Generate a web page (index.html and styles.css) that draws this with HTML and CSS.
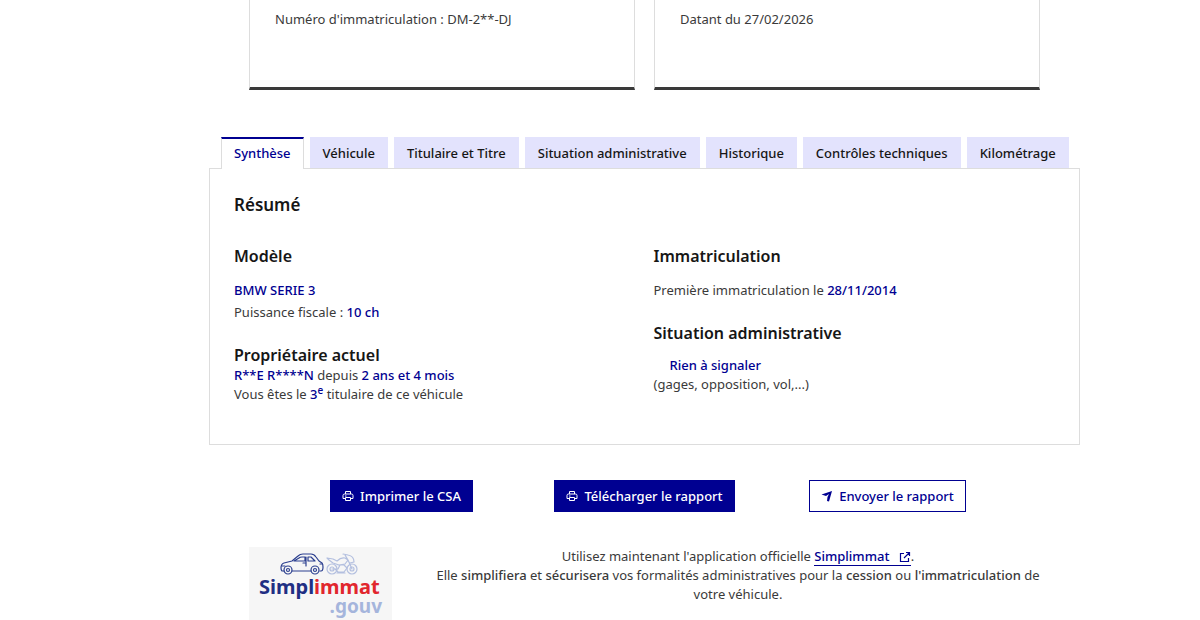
FILE: index.html
```html
<!DOCTYPE html>
<html lang="fr">
<head>
    <meta charset="UTF-8">
    <meta name="viewport" content="width=device-width, initial-scale=1.0">
    <title>Rapport du véhicule</title>
    <link rel="stylesheet" href="styles.css">
</head>
<body>
    <main class="page">
        <div class="cards">
            <div class="card">
                <p>Numéro d'immatriculation : DM-2**-DJ</p>
            </div>
            <div class="card">
                <p>Datant du 27/02/2026</p>
            </div>
        </div>

        <div class="tabs" role="tablist">
            <button type="button" class="tab active" role="tab" aria-selected="true" aria-controls="synthese">Synthèse</button>
            <button type="button" class="tab" role="tab">Véhicule</button>
            <button type="button" class="tab" role="tab">Titulaire et Titre</button>
            <button type="button" class="tab" role="tab">Situation administrative</button>
            <button type="button" class="tab" role="tab">Historique</button>
            <button type="button" class="tab" role="tab">Contrôles techniques</button>
            <button type="button" class="tab" role="tab">Kilométrage</button>
        </div>

        <section class="panel" id="synthese" role="tabpanel">
            <h2>Résumé</h2>
            <div class="columns">
                <div class="column">
                    <div class="block">
                        <h3>Modèle</h3>
                        <p class="value">BMW SERIE 3</p>
                        <p>Puissance fiscale : <span class="value">10 ch</span></p>
                    </div>
                    <div class="block compact">
                        <h3>Propriétaire actuel</h3>
                        <p><span class="value">R**E R****N</span> depuis <span class="value">2 ans et 4 mois</span></p>
                        <p>Vous êtes le <span class="value">3<sup>e</sup></span> titulaire de ce véhicule</p>
                    </div>
                </div>
                <div class="column">
                    <div class="block">
                        <h3>Immatriculation</h3>
                        <p>Première immatriculation le <span class="value">28/11/2014</span></p>
                    </div>
                    <div class="block status">
                        <h3>Situation administrative</h3>
                        <p class="value indent">Rien à signaler</p>
                        <p>(gages, opposition, vol,...)</p>
                    </div>
                </div>
            </div>
        </section>

        <div class="actions">
            <button type="button" class="btn">
                <svg class="icon" viewBox="0 0 24 24" aria-hidden="true"><path fill="none" stroke="currentColor" stroke-width="2" d="M7 8V3h10v5M6 17H2v-6q0-3 3-3h14q3 0 3 3v6h-4M7 15h10v6H7zM6 12h3"/></svg>
                Imprimer le CSA
            </button>
            <button type="button" class="btn">
                <svg class="icon" viewBox="0 0 24 24" aria-hidden="true"><path fill="none" stroke="currentColor" stroke-width="2" d="M7 8V3h10v5M6 17H2v-6q0-3 3-3h14q3 0 3 3v6h-4M7 15h10v6H7zM6 12h3"/></svg>
                Télécharger le rapport
            </button>
            <button type="button" class="btn btn-secondary">
                <svg class="icon" viewBox="0 0 24 24" aria-hidden="true"><path fill="currentColor" d="M1 9 22 2l-6 21-4-1 1-8 3-6-6 4z"/></svg>
                Envoyer le rapport
            </button>
        </div>

        <div class="promo">
            <div class="logo">
                <svg class="vehicles" viewBox="0 0 80 22" aria-hidden="true">
                    <g fill="none" stroke="#2b3f8f" stroke-width="1.2" stroke-linecap="round" stroke-linejoin="round">
                        <path d="M5 18H3q-1-1-1-3 0-4 3-5l8-2 6-5q2-2 5-2h8q3 0 5 3l3 4 3 2q1 1 1 4 0 4-2 4h-1M13 18h19"/>
                        <path d="M15 8l5-3q1-1 3-1h3v4zM29 4h3l4 4h-7zM27 4v9M24 10h2M3 13h3M41 11h2"/>
                        <circle cx="9" cy="17" r="4"/><circle cx="9" cy="17" r="1.5"/>
                        <circle cx="36" cy="17" r="4"/><circle cx="36" cy="17" r="1.5"/>
                    </g>
                    <g fill="none" stroke="#b3bfdf" stroke-width="1.2" stroke-linecap="round" stroke-linejoin="round">
                        <circle cx="53" cy="16" r="5"/><circle cx="53" cy="16" r="2"/>
                        <circle cx="73" cy="16" r="5"/><circle cx="73" cy="16" r="2"/>
                        <path d="M48 5l6 1 4 2q4-4 8-3l3 2-3 4-6 1-6-2-4-3zM64 1l5 1q6 1 6 7l-4 1M69 7l4 9M53 16h6l2-4M59 12h6l3 3-3 4h-6l-3-3M66 2l3 5M58 20h8"/>
                    </g>
                </svg>
                <div class="logo-name"><span>Simpl</span><span class="red">immat</span></div>
                <div class="logo-gouv">.gouv</div>
            </div>
            <p class="promo-text">
                Utilisez maintenant l'application officielle
                <a href="#">Simplimmat <svg class="external" viewBox="0 0 24 24" aria-hidden="true"><path fill="none" stroke="currentColor" stroke-width="2.4" d="M10 5H3v16h16v-7M14 3h7v7M21 3 10 14"/></svg></a>.<br>
                Elle <strong>simplifiera</strong> et <strong>sécurisera</strong> vos formalités administratives pour la <strong>cession</strong> ou <strong>l'immatriculation</strong> de votre véhicule.
            </p>
        </div>
    </main>
</body>
</html>
```

FILE: styles.css
```css
* {
    box-sizing: border-box;
}
body {
    margin: 0;
    background-color: #fff;
    color: #3a3a3a;
    font-family: "Noto Sans", sans-serif;
    font-size: 13px;
    line-height: 19px;
}
h2, h3, p {
    margin: 0;
}
.page {
    margin: 0 120px 0 209px;
}
.cards {
    display: grid;
    grid-template-columns: 1fr 1fr;
    gap: 19px;
    padding: 0 40px;
}
.card {
    padding: 10px 25px 58px;
    border: 1px solid #ddd;
    border-top: none;
    border-bottom: 3px solid #3a3a3a;
}
.tabs {
    display: flex;
    gap: 6px;
    margin-top: 47px;
    padding: 0 12px;
}
.tab {
    padding: 6px 12px 5px;
    border: 1px solid #e3e3fd;
    border-bottom: none;
    background-color: #e3e3fd;
    color: #161616;
    font-family: inherit;
    font-size: 13px;
    font-weight: 500;
    line-height: 19px;
    white-space: nowrap;
    cursor: pointer;
}
.tab.active {
    position: relative;
    margin-bottom: -1px;
    padding: 5px 12px 6px;
    border-color: #ddd;
    border-top: 2px solid #000091;
    background-color: #fff;
    color: #000091;
}
.panel {
    padding: 24px 24px 40px;
    border: 1px solid #ddd;
}
h2, h3 {
    color: #161616;
    font-weight: 600;
}
h2 {
    font-size: 17px;
    line-height: 24px;
}
h3 {
    margin-bottom: 12px;
    font-size: 16px;
    line-height: 22px;
}
.columns {
    display: grid;
    grid-template-columns: 1fr 1fr;
    gap: 18px;
    margin-top: 28px;
}
.column {
    display: flex;
    flex-direction: column;
    gap: 21px;
}
.block p {
    line-height: 22px;
}
.compact h3 {
    margin-bottom: 0;
}
.compact p, .status p {
    line-height: 19px;
}
.value {
    color: #000091;
    font-weight: 500;
}
.indent {
    padding-left: 16px;
}
sup {
    font-size: 10px;
    line-height: 0;
}
.actions {
    display: grid;
    grid-template-columns: repeat(3, 1fr);
    justify-items: center;
    margin-top: 35px;
    padding: 0 71px;
}
.btn {
    display: flex;
    align-items: center;
    gap: 6px;
    height: 32px;
    padding: 0 11px;
    border: 1px solid #000091;
    background-color: #000091;
    color: #fff;
    font-family: inherit;
    font-size: 13px;
    font-weight: 500;
    white-space: nowrap;
    cursor: pointer;
}
.btn-secondary {
    background-color: #fff;
    color: #000091;
}
.icon {
    width: 12px;
    height: 12px;
}
.promo {
    display: flex;
    align-items: flex-start;
    gap: 38px;
    margin-top: 35px;
    padding: 0 34px 0 40px;
}
.logo {
    flex: none;
    width: 143px;
    padding: 6px 10px 5px;
    background-color: #f6f6f6;
    font-weight: 700;
}
.vehicles {
    display: block;
    width: 80px;
    height: 22px;
    margin-left: 20px;
}
.logo-name {
    color: #1f2f83;
    font-size: 20px;
    line-height: 23px;
}
.red {
    color: #e1262d;
}
.logo-gouv {
    color: #a5b5dc;
    font-size: 19px;
    line-height: 17px;
    text-align: right;
}
.promo-text {
    flex: 1;
    text-align: center;
}
.promo-text a {
    border-bottom: 1px solid #000091;
    color: #000091;
    font-weight: 500;
    text-decoration: none;
}
.external {
    width: 12px;
    height: 12px;
    margin-left: 6px;
    vertical-align: -2px;
}
strong {
    font-weight: 500;
}
```
